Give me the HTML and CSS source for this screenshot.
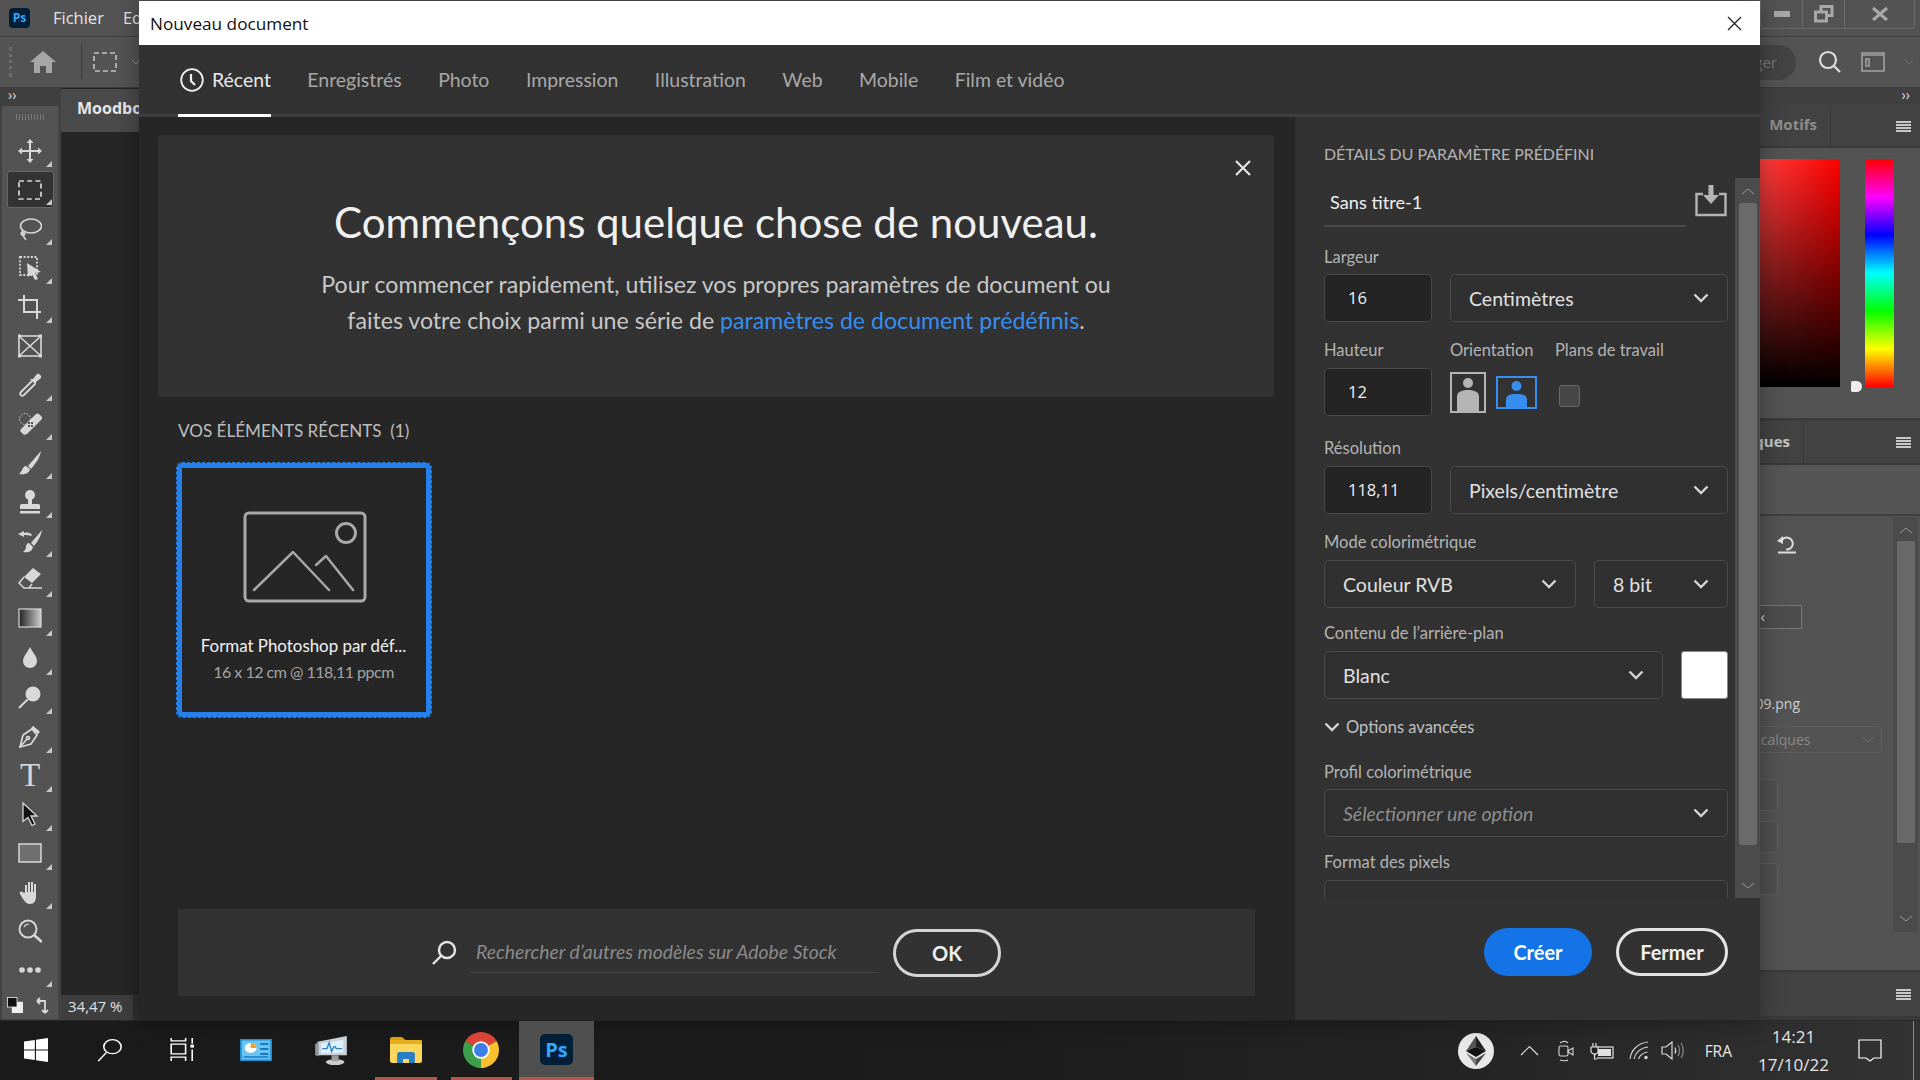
FILE: index.html
```html
<!DOCTYPE html>
<html lang="fr">
<head>
<meta charset="utf-8">
<title>Nouveau document</title>
<link rel="stylesheet" href="styles.css">
</head>
<body>
<div class="app">
  <header class="menubar">
    <div class="ps-logo small">Ps</div>
    <nav class="menu"><span>Fichier</span><span class="clipped">Edition</span></nav>
    <div class="winbtns">
      <div class="winbtn"><svg width="16" height="6"><rect width="16" height="6" fill="#a8a8a8"/></svg></div>
      <div class="winbtn"><svg width="20" height="18" fill="none" stroke="#a8a8a8" stroke-width="3"><rect x="7" y="1.5" width="11" height="9"/><rect x="1.5" y="7" width="11" height="9" fill="#535353"/></svg></div>
      <div class="winbtn wide"><svg width="16" height="14" stroke="#a8a8a8" stroke-width="3.2"><path d="M1 1l14 12M15 1L1 13"/></svg></div>
    </div>
  </header>
  <div class="optionbar">
    <div class="grip"></div>
    <svg class="home" width="26" height="22" viewBox="0 0 26 22" fill="#a6a6a6"><path d="M13 0L0 11h4v11h6v-7h6v7h6V11h4z"/></svg>
    <div class="optsep"></div>
    <svg width="24" height="20" viewBox="0 0 24 20" fill="none" stroke="#c4c4c4" stroke-width="1.6" stroke-dasharray="5 3"><rect x="1" y="1" width="22" height="18"/></svg>
    <svg class="optchev" width="10" height="6" fill="none" stroke="#8a8a8a"><path d="M1 1l4 4 4-4"/></svg>
    <div class="optright">
      <div class="sharepill">Partager</div>
      <svg width="24" height="24" viewBox="0 0 24 24" fill="none" stroke="#dedede" stroke-width="2.2"><circle cx="10" cy="10" r="8"/><path d="M16 16l6 6"/></svg>
      <svg width="24" height="20" viewBox="0 0 24 20" fill="none" stroke="#a0a0a0" stroke-width="1.6"><rect x="1" y="1" width="22" height="18"/><path d="M1 3h22M5 7h3v7H5z"/></svg>
      <svg width="10" height="6" fill="none" stroke="#6e6e6e"><path d="M1 1l4 4 4-4"/></svg>
    </div>
  </div>
  <div class="workspace">
    <aside class="leftcol">
      <div class="collapse">&#8250;&#8250;</div>
      <div class="toolbar">
        <div class="toolgrip"></div>
        <div class="tool more"><svg viewBox="0 0 24 24" fill="#d8d8d8"><path d="M12 0l3.5 4H13v7h7V8.500l4 3.500-4 3.500V13h-7v7h2.500L12 24l-3.500-4H11v-7H4v2.500L0 12l4-3.500V11h7V4H8.500z"/></svg></div>
        <div class="tool more on"><svg viewBox="0 0 24 24" fill="none" stroke="#d8d8d8" stroke-width="1.7" stroke-dasharray="5 3.200"><rect x="1" y="3" width="22" height="18"/></svg></div>
        <div class="tool more"><svg viewBox="0 0 24 24" fill="none" stroke="#d8d8d8" stroke-width="1.6"><ellipse cx="13" cy="9" rx="10.500" ry="7"/><path d="M5 14c-3 2-2 5 1 4 2-1 0-3-1-2-1 2 1 4 3 7"/></svg></div>
        <div class="tool more"><svg viewBox="0 0 24 24" fill="none" stroke="#d8d8d8" stroke-width="1.800"><rect x="2" y="1" width="17" height="18" stroke-dasharray="2 1.600"/><path fill="#d8d8d8" stroke="none" d="M9 7l14 9-6 1 3 6-3 1-3-6-4 3z"/></svg></div>
        <div class="tool more"><svg viewBox="0 0 24 24" fill="none" stroke="#d8d8d8" stroke-width="2"><path d="M0 5h5M6 0v17h17M6 5h13v19"/></svg></div>
        <div class="tool"><svg viewBox="0 0 24 24" fill="none" stroke="#d8d8d8" stroke-width="1.600"><rect x="1" y="2" width="22" height="20"/><path d="M1 2l22 20M23 2L1 22"/><path stroke-width="3" d="M0 2h3M21 2h3M0 22h3M21 22h3"/></svg></div>
        <div class="tool more"><svg viewBox="0 0 24 24" fill="none" stroke="#d8d8d8" stroke-width="1.800"><path d="M14 8L3 19c-2 2 0 5 3 3L17 11"/><path fill="#d8d8d8" stroke="none" d="M12 6l3 0 4-5c2-1 5 2 4 4l-5 4 0 3z"/></svg></div>
        <div class="tool more"><svg viewBox="0 0 24 24" fill="#d8d8d8"><circle cx="7" cy="7" r="5.500" fill="none" stroke="#d8d8d8" stroke-dasharray="1.500 1.500"/><path d="M3 17L17 3c2-2 3-2 5 0l1 1c2 2 1 3 0 4L9 22c-2 1-3 1-4 0l-2-2c-1-1-1-2 0-3z"/><path fill="#555" d="M10 10h2v2h-2zM13 10h2v2h-2zM10 13h2v2h-2zM13 13h2v2h-2z"/></svg></div>
        <div class="tool more"><svg viewBox="0 0 24 24" fill="#d8d8d8"><path d="M23 0L10 15l3 3C19 11 22 6 23 0zM8 15c-2 0-3 2-4 4s-2 3-3 4c4 1 10 0 11-5z"/></svg></div>
        <div class="tool more"><svg viewBox="0 0 24 24" fill="#d8d8d8"><circle cx="12" cy="5" r="5"/><path d="M10 8h4v6h6c2 0 2 1 2 2v3H2v-3c0-1 0-2 2-2h6z"/><rect x="2" y="21" width="20" height="2.500"/></svg></div>
        <div class="tool more"><svg viewBox="0 0 24 24" fill="#d8d8d8"><path d="M24 1L13 14l3 3C21 11 23 6 24 1zM11 14c-2 0-3 2-3 4s-1 3-3 5c4 1 9 0 10-5zM0 5l6-3v2c4-1 7 0 8 2l-1 1c-2-1-4-1-7-1v2z"/></svg></div>
        <div class="tool more"><svg viewBox="0 0 24 24" fill="none" stroke="#d8d8d8" stroke-width="1.500"><path fill="#d8d8d8" stroke="none" d="M15 0l8 6-9 9-8-6z"/><path d="M6 9l-5 6 5 5h5l3-4M6 20h18"/></svg></div>
        <div class="tool more"><svg viewBox="0 0 24 24"><defs><linearGradient id="g1"><stop offset="0" stop-color="#222"/><stop offset="1" stop-color="#ccc"/></linearGradient></defs><rect x="1" y="2" width="22" height="18" fill="url(#g1)" stroke="#d8d8d8" stroke-width="1.200"/></svg></div>
        <div class="tool more"><svg viewBox="0 0 24 24" fill="#d8d8d8"><path d="M12 1c2 5 7 9 7 14a7 7 0 0 1-14 0c0-5 5-9 7-14z"/></svg></div>
        <div class="tool more"><svg viewBox="0 0 24 24" fill="#d8d8d8"><circle cx="15" cy="9" r="7.500"/><path d="M1 23L9.500 14.500" stroke="#d8d8d8" stroke-width="2"/></svg></div>
        <div class="tool more"><svg viewBox="0 0 24 24" fill="none" stroke="#d8d8d8" stroke-width="1.700"><path d="M2 23l3-12 9-6 5 6-6 9z"/><path stroke-width="3" d="M14 3l7 6"/><path d="M2 23l7-8"/><circle cx="10" cy="14" r="1.500"/></svg></div>
        <div class="tool more"><span class="ttool">T</span></div>
        <div class="tool more"><svg viewBox="0 0 24 24"><path fill="#111" stroke="#d8d8d8" stroke-width="1.300" d="M5 1l14 13h-6l4 8-3 1.500-4-8-5 4z"/></svg></div>
        <div class="tool more"><svg viewBox="0 0 24 24"><rect x="1" y="3" width="22" height="18" fill="#6f6f6f" stroke="#d8d8d8" stroke-width="1.500"/></svg></div>
        <div class="tool more"><svg viewBox="0 0 24 24" fill="#d8d8d8"><path d="M7 13V5h2v7h1V2h2v10h1V2h2v10h1V4h2v12c0 5-2 8-6 8-3 0-5-2-7-5l-3-5c-1-2 1-3 2-2z"/></svg></div>
        <div class="tool"><svg viewBox="0 0 24 24" fill="none" stroke="#d8d8d8" stroke-width="1.900"><circle cx="10" cy="10" r="8.500"/><path stroke-width="1.200" d="M6 8c1-2 3-3 5-3"/><path stroke-width="2.600" d="M16 16l8 7"/></svg></div>
        <div class="tool more"><svg viewBox="0 0 24 24" fill="#d8d8d8"><circle cx="4" cy="12" r="2.800"/><circle cx="12" cy="12" r="2.800"/><circle cx="20" cy="12" r="2.800"/></svg></div>
        <div class="colorswap">
          <svg width="16" height="16" viewBox="0 0 20 20"><rect x="6" y="6" width="14" height="14" fill="#eee"/><rect x="0.500" y="0.500" width="12" height="12" fill="#111" stroke="#eee"/></svg>
          <svg width="16" height="18" fill="none" stroke="#d8d8d8" stroke-width="1.800"><path d="M1 4h8v11M1 4l3-3M1 4l3 3M9 16l-3-3M9 16l3-3"/></svg>
        </div>
      </div>
    </aside>
    <main class="canvas">
      <div class="doctab">Moodboard</div>
      <div class="artboard"></div>
      <div class="statusbar"><span class="zoomval">34,47 %</span></div>
    </main>
    <aside class="rightcol">
      <div class="collapse right">&#8250;&#8250;</div>
      <div class="paneltabs h40"><span class="ptab">Motifs</span><span class="burger"></span></div>
      <div class="colorpanel">
        <div class="field-sat"></div>
        <div class="hue"><span class="huemark"></span></div>
      </div>
      <div class="paneltabs h41"><span class="ptab calques">Calques</span><span class="burger"></span></div>
      <div class="band"></div>
      <div class="propspanel">
        <div class="propsbody">
          <svg class="undo" width="20" height="20" viewBox="0 0 20 20" fill="none" stroke="#dedede" stroke-width="2"><path d="M1 18.500h18M4 8a6 6 0 1 1 5 7.500"/><path fill="#dedede" stroke="none" d="M0 7l6-5v8z"/></svg>
          <div class="pinput">‹</div>
          <div class="pname">IMG_2009.png</div>
          <div class="pselect"><span>Tous les calques</span><svg width="14" height="8" fill="none" stroke="#6e6e6e"><path d="M1 1l6 5 6-5"/></svg></div>
          <div class="pbtn first"></div>
          <div class="pbtn"></div>
          <div class="pbtn"></div>
        </div>
        <div class="pscroll"><svg width="14" height="8" fill="none" stroke="#999"><path d="M1 7l6-5 6 5"/></svg><div class="pthumb"></div><svg class="pdown" width="14" height="8" fill="none" stroke="#999"><path d="M1 1l6 5 6-5"/></svg></div>
      </div>
      <div class="paneltabs h45"><span class="burger"></span></div>
    </aside>
  </div>
</div>

<section class="dialog">
  <div class="titlebar"><span>Nouveau document</span>
    <svg width="15" height="15" stroke="#222" stroke-width="1.300"><path d="M1 1l13 13M14 1L1 14"/></svg>
  </div>
  <nav class="tabs">
    <div class="tab active"><svg width="24" height="24" viewBox="0 0 24 24" fill="none" stroke="#f0f0f0" stroke-width="1.800"><circle cx="12" cy="12" r="10.800"/><path stroke-width="2.200" d="M11 6v7l4 4"/></svg><span>Récent</span></div>
    <div class="tab">Enregistrés</div>
    <div class="tab">Photo</div>
    <div class="tab">Impression</div>
    <div class="tab">Illustration</div>
    <div class="tab">Web</div>
    <div class="tab">Mobile</div>
    <div class="tab">Film et vidéo</div>
  </nav>
  <div class="dbody">
    <div class="dmain">
      <div class="hero">
        <svg class="heroclose" width="18" height="18" stroke="#e4e4e4" stroke-width="2.200"><path d="M2 2l14 14M16 2L2 16"/></svg>
        <h1>Commençons quelque chose de nouveau.</h1>
        <p>Pour commencer rapidement, utilisez vos propres paramètres de document ou<br>faites votre choix parmi une série de <a>paramètres de document prédéfinis</a>.</p>
      </div>
      <h2 class="recent-h">VOS ÉLÉMENTS RÉCENTS&nbsp; (1)</h2>
      <div class="card">
        <svg width="124" height="92" viewBox="0 0 124 92" fill="none" stroke="#a8a8a8" stroke-width="3" stroke-linejoin="round" stroke-linecap="round"><rect x="2" y="2" width="120" height="88" rx="4"/><circle cx="103" cy="22" r="9.500"/><path stroke-width="2.500" d="M11 79l39-38 36 38M73 54l10-9 27 34"/></svg>
        <div class="cardtitle">Format Photoshop par déf...</div>
        <div class="cardsub">16 x 12 cm @ 118,11 ppcm</div>
      </div>
      <div class="stock">
        <svg width="26" height="26" viewBox="0 0 26 26" fill="none" stroke="#e4e4e4" stroke-width="2.400"><circle cx="16" cy="10" r="8"/><path d="M10 16l-8 8"/></svg>
        <div class="stockinput">Rechercher d’autres modèles sur Adobe Stock</div>
        <div class="btn ghost ok">OK</div>
      </div>
    </div>
    <aside class="details">
      <h2>DÉTAILS DU PARAMÈTRE PRÉDÉFINI</h2>
      <div class="scrollwrap">
        <div class="form">
          <div class="namerow">
            <div class="nameinput">Sans titre-1</div>
            <svg width="32" height="32" viewBox="0 0 32 32" fill="none" stroke="#b4b4b4" stroke-width="2.400"><path d="M8 9H1.500v21h29V9H24"/><path fill="#b4b4b4" stroke="none" d="M13.500 0h5v10H24l-8 9-8-9h5.500z"/></svg>
          </div>
          <label class="lab l1">Largeur</label>
          <div class="row"><div class="num">16</div><div class="sel grow"><span>Centimètres</span><svg class="chev" viewBox="0 0 16 10"><path d="M1.500 1.500L8 8l6.500-6.500"/></svg></div></div>
          <div class="tri l2"><label class="lab">Hauteur</label><label class="lab">Orientation</label><label class="lab">Plans de travail</label></div>
          <div class="row"><div class="num">12</div>
            <div class="orient">
              <svg width="36" height="41" viewBox="0 0 36 41"><rect x="1" y="1" width="34" height="39" fill="none" stroke="#b4b4b4" stroke-width="2"/><circle cx="18" cy="11" r="5" fill="#b4b4b4"/><path fill="#b4b4b4" d="M7 39V25c0-5 4-7 11-7s11 2 11 7v14z"/></svg>
              <svg width="41" height="33" viewBox="0 0 41 33"><rect x="1" y="1" width="39" height="31" fill="none" stroke="#378ef0" stroke-width="2"/><circle cx="20.500" cy="10" r="5" fill="#378ef0"/><path fill="#378ef0" d="M10 31v-7c0-5 4-6 10.500-6S31 19 31 24v7z"/></svg>
            </div>
            <div class="check"></div>
          </div>
          <label class="lab l3">Résolution</label>
          <div class="row"><div class="num">118,11</div><div class="sel grow"><span>Pixels/centimètre</span><svg class="chev" viewBox="0 0 16 10"><path d="M1.500 1.500L8 8l6.500-6.500"/></svg></div></div>
          <label class="lab l4">Mode colorimétrique</label>
          <div class="row"><div class="sel grow"><span>Couleur RVB</span><svg class="chev" viewBox="0 0 16 10"><path d="M1.500 1.500L8 8l6.500-6.500"/></svg></div><div class="sel w134"><span>8 bit</span><svg class="chev" viewBox="0 0 16 10"><path d="M1.500 1.500L8 8l6.500-6.500"/></svg></div></div>
          <label class="lab l5">Contenu de l’arrière-plan</label>
          <div class="row"><div class="sel grow"><span>Blanc</span><svg class="chev" viewBox="0 0 16 10"><path d="M1.500 1.500L8 8l6.500-6.500"/></svg></div><div class="swatch"></div></div>
          <div class="advanced"><svg class="chev" viewBox="0 0 16 10"><path d="M1.500 1.500L8 8l6.500-6.500"/></svg><span>Options avancées</span></div>
          <label class="lab l6">Profil colorimétrique</label>
          <div class="row"><div class="sel grow"><em>Sélectionner une option</em><svg class="chev" viewBox="0 0 16 10"><path d="M1.500 1.500L8 8l6.500-6.500"/></svg></div></div>
          <label class="lab l7">Format des pixels</label>
          <div class="row"><div class="sel grow low"><span>Pixels carrés</span><svg class="chev" viewBox="0 0 16 10"><path d="M1.500 1.500L8 8l6.500-6.500"/></svg></div></div>
        </div>
        <div class="dscroll">
          <svg width="14" height="8" fill="none" stroke="#999"><path d="M1 7l6-5 6 5"/></svg>
          <div class="dthumb"></div>
          <svg width="14" height="8" fill="none" stroke="#999"><path d="M1 1l6 5 6-5"/></svg>
        </div>
      </div>
      <div class="actions"><div class="btn primary">Créer</div><div class="btn ghost">Fermer</div></div>
    </aside>
  </div>
</section>

<footer class="taskbar">
  <div class="tasks">
    <div class="task narrow"><svg width="24" height="24" viewBox="0 0 21 24" preserveAspectRatio="none" fill="#fff"><path d="M0 3.500L9.500 2v9.500H0zM10.500 1.800L21 0v11.500H10.500zM0 12.500h9.500V22L0 20.500zM10.500 12.500H21V24l-10.500-1.800z"/></svg></div>
    <div class="task narrow"><svg width="25" height="24" viewBox="0 0 21 25" preserveAspectRatio="none" fill="none" stroke="#fff" stroke-width="1.300"><circle cx="13" cy="9" r="7.300"/><path d="M8 15L1 24"/></svg></div>
    <div class="task narrow"><svg width="24" height="23" viewBox="0 0 20 24" preserveAspectRatio="none" fill="none" stroke="#fff" stroke-width="1.300"><path d="M1 0v3h12V0M1 6.500h12v10H1zM1 24v-4h12v4M18.500 0v6M18.500 12v12"/><rect x="17" y="7" width="3" height="3" fill="#fff" stroke="none"/></svg></div>
    <div class="task"><svg width="32" height="22" viewBox="0 0 27 22" preserveAspectRatio="none"><rect width="27" height="22" fill="#1d8fd8"/><rect x="1.500" y="1.500" width="24" height="19" fill="#6cc4f0"/><circle cx="9" cy="9" r="5" fill="#fff"/><path d="M9 9V4a5 5 0 0 1 5 5z" fill="#f0a030"/><path d="M17 4h7v2h-7zM17 9h7v2h-7zM17 14h7v2h-7z" fill="#1a78c0"/><path d="M3 17h21v2H3z" fill="#2a8fd0"/></svg></div>
    <div class="task"><svg width="34" height="30" viewBox="0 0 29 31" preserveAspectRatio="none"><path d="M3 7l25-6v20L3 21z" fill="#c9d2d8"/><path d="M6 9l19-4v13L6 19z" fill="#dff1fa"/><path d="M7 14h4l2-6 2 9 2-5h1l1 2h5" fill="none" stroke="#2a86c4" stroke-width="1.200"/><path d="M1 9l3-1v14l-3-1z" fill="#8f9a9f"/><ellipse cx="18" cy="28" rx="8" ry="3" fill="#ccc"/><rect x="15" y="21" width="6" height="6" fill="#9a9a9a"/></svg></div>
    <div class="task open"><svg width="32" height="26" viewBox="0 0 27 26" preserveAspectRatio="none"><path d="M0 2a2 2 0 0 1 2-2h8l3 3h-13z" fill="#d8a008"/><path d="M0 3h26a1 1 0 0 1 1 1v4H0z" fill="#e8b020"/><path d="M0 7h27v17a2 2 0 0 1-2 2H2a2 2 0 0 1-2-2z" fill="#fbd75b"/><path d="M6 26V17a2 2 0 0 1 2-2h11a2 2 0 0 1 2 2v9h-5v-4h-5v4z" fill="#2a7fc4"/></svg></div>
    <div class="task open"><svg width="36" height="36" viewBox="0 0 28 28"><path d="M14 14L26.100 7A14 14 0 0 0 1.900 7z" fill="#db4437"/><path d="M14 14L26.100 7A14 14 0 0 1 14 28z" fill="#fbc02d"/><path d="M14 14L14 28A14 14 0 0 1 1.900 7z" fill="#3a9e4b"/><circle cx="14" cy="14" r="6.800" fill="#fff"/><circle cx="14" cy="14" r="5.400" fill="#3b7ee8"/></svg></div>
    <div class="task current"><div class="ps-logo">Ps</div></div>
  </div>
  <div class="tray">
    <div class="eth"><svg width="20" height="30" viewBox="0 0 20 30"><path d="M10 0L0 15l10-4z" fill="#555"/><path d="M10 0l10 15-10-4z" fill="#222"/><path d="M0 15l10-4 10 4-10 6z" fill="#111"/><path d="M0 17l10 13v-7z" fill="#777"/><path d="M20 17L10 30v-7z" fill="#444"/></svg></div>
    <svg class="t1" width="19" height="11" fill="none" stroke="#d8d8d8" stroke-width="1.200"><path d="M1 10l8.500-8.500L18 10"/></svg>
    <svg class="t2" width="16" height="24" viewBox="0 0 16 24" fill="none" stroke="#d8d8d8" stroke-width="1.100"><rect x="1" y="7" width="9" height="10" rx="1.500"/><path d="M10 12l5-3v7l-5-3zM2 4c3-2 6-2 8 0M2 21c3 1 6 1 8 0"/></svg>
    <svg class="t3" width="24" height="20" viewBox="0 0 24 20" fill="none" stroke="#e0e0e0" stroke-width="1.200"><rect x="5" y="6" width="18" height="11"/><rect x="8" y="8" width="13" height="7" fill="#e0e0e0" stroke="none"/><path fill="#1f1f1f" d="M1 6h7v4c0 2-2 3-3.500 3S1 12 1 10zM3 2v4M6 2v4M4.500 13v5h3"/></svg>
    <svg class="t4" width="20" height="19" viewBox="0 0 20 19" fill="none" stroke="#d0d0d0" stroke-width="1.200"><path d="M1 18C2 9 9 2 19 1M5 18c1-6 6-11 14-12M9.500 18c1-3 3-6 9-7"/><circle cx="17" cy="16.500" r="1.700" fill="#e0e0e0" stroke="none"/></svg>
    <svg class="t5" width="23" height="19" viewBox="0 0 23 19" fill="none" stroke="#d8d8d8" stroke-width="1.200"><path d="M1 6h4l6-5v17l-6-5H1z"/><path d="M14 6.500c1 2 1 4 0 6"/><path stroke="#888" d="M17 4c2 3 2 8 0 11M20 2c3 4 3 11 0 15"/></svg>
    <span class="lang">FRA</span>
    <div class="clock"><span>14:21</span><span>17/10/22</span></div>
    <svg class="t6" width="24" height="24" viewBox="0 0 24 24" fill="none" stroke="#fff" stroke-width="1.200"><path d="M1 1h22v18h-7l-4 3-4-3H1z"/></svg>
    <div class="peek"></div>
  </div>
</footer>
</body>
</html>
```
FILE: styles.css
```css
* { box-sizing: border-box; }
html, body { margin: 0; height: 100%; }
body {
  width: 1920px; height: 1080px; overflow: hidden; position: relative;
  display: flex; flex-direction: column;
  background: #2b2b2b; color: #ddd;
  font-family: "Open Sans", "Noto Sans", sans-serif;
}
svg { display: block; flex: none; }
h1, h2, p { margin: 0; font-weight: 400; }

/* Photoshop app behind the dialog */
.app { height: 1020px; display: flex; flex-direction: column; background: #3a3a3a; }
.menubar { height: 37px; background: #535353; display: flex; align-items: center; padding-left: 9px; border-bottom: 1px solid #3c3c3c; }
.ps-logo {
  width: 33px; height: 31px; border-radius: 5px; background: #001e36; color: #31a8ff;
  font: 700 20px/31px "Open Sans", sans-serif; text-align: center;
}
.ps-logo.small { width: 21px; height: 20px; border-radius: 4px; font-size: 12px; line-height: 20px; }
.menu { display: flex; gap: 19px; margin: -2px 0 0 23px; font-size: 16.500px; color: #e4e4e4; }
.menu .clipped { width: 17px; overflow: hidden; white-space: nowrap; }
.winbtns { margin-left: auto; margin-right: 5px; margin-top: -8px; height: 29px; width: 155px; display: flex; border: 1px solid #6a6a6a; border-top: 0; border-radius: 0 0 4px 4px; }
.winbtn { width: 42px; display: flex; align-items: center; justify-content: center; border-right: 1px solid #6a6a6a; }
.winbtn.wide { flex: 1; border-right: 0; }

.optionbar { height: 51px; background: #535353; display: flex; align-items: center; padding-left: 9px; border-bottom: 1px solid #3c3c3c; }
.grip { width: 3px; height: 30px; border-left: 3px dotted #6c6c6c; }
.home { margin-left: 18px; }
.optsep { width: 1px; height: 34px; background: #3c3c3c; margin: 0 11px 0 25px; }
.optchev { margin-left: 14px; }
.optright { margin-left: auto; display: flex; align-items: center; gap: 19px; padding-right: 6px; }
.sharepill { width: 120px; height: 35px; margin-right: 3px; border-radius: 18px; background: #434343; color: #777; font-size: 15px; line-height: 35px; text-align: right; padding-right: 19px; }

.workspace { flex: 1; min-height: 0; display: flex; }
.leftcol { width: 61px; display: flex; flex-direction: column; flex: none; background: #424242; }
.collapse { height: 18px; flex: none; font-size: 14px; line-height: 14px; color: #ddd; padding-left: 8px; background: #404040; }
.collapse.right { text-align: right; padding: 0 10px 0 0; }
.toolbar { flex: 1; margin: 0 2px 1px 2px; background: #535353; display: flex; flex-direction: column; align-items: center; border-right: 1px solid #484848; }
.toolgrip { width: 28px; height: 6px; flex: none; margin: 8px 0 11px; background: repeating-linear-gradient(90deg, #7a7a7a 0 1px, transparent 1px 3px); }
.tool { width: 47px; height: 39.050px; flex: none; display: flex; align-items: center; justify-content: center; position: relative; border: 1px solid transparent; border-radius: 3px; }
.tool svg { width: 24px; height: 24px; }
.tool.on { background: #333; border-color: #666; height: 37px; margin: 1px 0; }
.tool.more::after { content: ""; position: absolute; right: 1px; bottom: 2px; border: 3px solid transparent; border-right-color: #c8c8c8; border-bottom-color: #c8c8c8; }
.ttool { font: 400 33px/32px "Liberation Serif", serif; color: #d8d8d8; }
.colorswap { margin-top: auto; width: 50px; height: 22px; display: flex; justify-content: space-between; padding: 2px 3px 0 2px; margin-bottom: 2px; }

.canvas { flex: 1; min-width: 0; display: flex; flex-direction: column; background: #262626; }
.doctab { height: 43px; width: 200px; background: #4a4a4a; padding: 3px 0 0 16px; font: 700 16px/32px "Open Sans", sans-serif; color: #e8e8e8; margin-top: 1px; }
.artboard { flex: 1; }
.statusbar { height: 25px; background: #2f2f2f; }
.zoomval { display: block; width: 72px; height: 25px; background: #3e3e3e; padding-left: 7px; font-size: 15px; line-height: 23px; color: #e0e0e0; }

.rightcol { width: 260px; flex: none; display: flex; flex-direction: column; background: #3a3a3a; }
.paneltabs { display: flex; align-items: center; justify-content: flex-end; background: #424242; padding-right: 9px; border-bottom: 2px solid #393939; position: relative; }
.h40 { height: 42px; }
.h41 { height: 44px; margin-top: 1px; }
.h45 { height: 46px; margin-top: 2px; margin-bottom: 2px; }
.ptab { font: 700 15px/37px "Open Sans", sans-serif; color: #8e8e8e; margin-right: 65px; height: 100%; padding: 0 13px 0 0; border-right: 1px solid #393939; }
.ptab.calques { color: #c4c4c4; margin-right: 92px; line-height: 40px; }
.burger { width: 15px; height: 11px; background: repeating-linear-gradient(180deg, #c8c8c8 0 2px, transparent 2px 3px); }
.colorpanel { height: 272px; background: #535353; display: flex; padding: 11px 0 0 100px; border-bottom: 2px solid #3a3a3a; }
.field-sat { width: 80px; height: 228px; background: linear-gradient(180deg, transparent, #000), linear-gradient(90deg, #ff4040, #ff0000); }
.hue { width: 29px; height: 228px; margin-left: 25px; position: relative; background: linear-gradient(180deg, #f00, #f0f 16.670%, #00f 33.330%, #0ff 50%, #0f0 66.670%, #ff0 83.330%, #f00); }
.huemark { position: absolute; left: -14px; bottom: -5px; width: 11px; height: 11px; background: #eee; border-radius: 2px 6px 6px 2px; }
.band { height: 51px; background: #555; border-bottom: 2px solid #3f3f3f; }
.propspanel { flex: 1; display: flex; background: #535353; padding-top: 1px; position: relative; }
.propsbody { flex: 1; display: flex; flex-direction: column; align-items: flex-end; min-width: 0; }
.undo { margin: 17px 96px 0 0; flex: none; }
.pinput { width: 150px; height: 24px; flex: none; margin: 51px 91px 0 0; border: 1px solid #777; background: #4c4c4c; font-size: 15px; line-height: 21px; text-align: right; padding-right: 36px; color: #ddd; }
.pname { margin: 65px 93px 0 0; font-size: 14px; line-height: 20px; color: #d0d0d0; flex: none; }
.pselect { width: 220px; height: 27px; flex: none; margin: 12px 11px 0 0; display: flex; align-items: center; justify-content: space-between; padding: 0 6px 0 41px; border: 1px solid #5e5e5e; border-radius: 4px; font-size: 14px; color: #8a8a8a; white-space: nowrap; }
.pbtn { width: 120px; height: 32px; flex: none; margin: 10px 115px 0 0; border: 1px solid #5e5e5e; border-radius: 4px; background: #4f4f4f; }
.pbtn.first { margin-top: 26px; }
.pscroll { width: 25px; height: 415px; margin-right: 2px; background: #4b4b4b; display: flex; flex-direction: column; align-items: center; padding-top: 9px; }
.pthumb { width: 18px; height: 302px; margin-top: 7px; background: #696969; border-radius: 2px; }
.pdown { margin-top: auto; margin-bottom: 9px; }

/* Modal dialog window */
.dialog { position: absolute; left: 139px; top: 1px; width: 1621px; height: 1019px; display: flex; flex-direction: column; background: #323232; box-shadow: 0 0 22px rgba(0,0,0,.35); }
.titlebar { height: 44px; flex: none; background: #fff; color: #101010; display: flex; align-items: center; justify-content: space-between; padding: 0 18px 0 11px; font-size: 17.200px; }
.tabs { height: 72px; flex: none; display: flex; gap: 36.500px; padding-left: 39px; background: #323232; border-bottom: 3px solid #3e3e3e; font: 400 19.450px/70px Lato, sans-serif; color: #a8a8a8; }
.tab { height: 72px; }
.tab.active { display: flex; align-items: center; gap: 8px; color: #eaeaea; border-bottom: 3px solid #fff; padding: 0 0 0 2px; line-height: 1; }
.dbody { flex: 1; min-height: 0; display: flex; }
.dmain { width: 1156px; flex: none; background: #262626; padding: 18px 21px 24px 19px; display: flex; flex-direction: column; }
.hero { height: 262px; flex: none; background: #323232; border-radius: 3px; text-align: center; position: relative; padding-top: 60px; }
.hero h1 { font: 400 42px/54px Lato, sans-serif; color: #f0f0f0; }
.hero p { margin-top: 17px; font: 400 23.150px/36px Lato, sans-serif; color: #c8c8c8; }
.hero a { color: #378ef0; }
.heroclose { position: absolute; right: 22px; top: 24px; }
.recent-h { margin: 23px 0 0 20px; font: 400 17.100px/22px Lato, sans-serif; color: #bdbdbd; }
.card { margin: 21px 0 0 18.500px; width: 254px; height: 254px; flex: none; background: #262626; border: 5px solid #2680eb; border-radius: 5px; outline: 1px dashed #2680eb; display: flex; flex-direction: column; align-items: center; padding-top: 43px; }
.card svg { margin-left: 2px; }
.cardtitle { margin-top: 31px; font: 400 16.900px/24px Lato, sans-serif; color: #f2f2f2; white-space: nowrap; }
.cardsub { margin-top: 2px; font: 400 16px/24px Lato, sans-serif; letter-spacing: -.5px; color: #a4a4a4; white-space: nowrap; }
.stock { margin: auto 0 0 20px; width: 1077px; height: 87px; flex: none; background: #323232; display: flex; align-items: center; padding: 0 0 0 253px; }
.stockinput { width: 409px; height: 41px; margin-left: 13px; border-bottom: 1px solid #444; font: italic 400 19.350px/40px Lato, sans-serif; color: #8a8a8a; padding-left: 6px; white-space: nowrap; }
.btn { height: 48px; border-radius: 24px; display: flex; align-items: center; justify-content: center; font: 700 20px/1 Lato, sans-serif; color: #f0f0f0; }
.btn.ghost { border: 3px solid #e4e4e4; background: transparent; }
.btn.ok { width: 108px; margin-left: 14px; border-color: #d4d4d4; }
.btn.primary { width: 108px; background: #1473e6; color: #fff; }
.actions .ghost { width: 112px; }

.details { flex: 1; display: flex; flex-direction: column; background: #323232; min-width: 0; }
.details h2 { height: 61px; padding: 26px 0 0 29px; font: 400 15.900px/22px Lato, sans-serif; color: #b4b4b4; white-space: nowrap; }
.scrollwrap { height: 720px; flex: none; display: flex; overflow: hidden; }
.form { width: 440px; flex: none; padding: 7px 7px 0 29px; display: flex; flex-direction: column; }
.namerow { height: 42px; flex: none; display: flex; justify-content: space-between; }
.nameinput { width: 362px; height: 42px; border-bottom: 2px solid #4a4a4a; padding-left: 6px; font: 400 18.200px/35px Lato, sans-serif; color: #f0f0f0; }
.namerow svg { margin-right: 1px; }
.lab { display: block; height: 22px; flex: none; font: 400 16.500px/22px Lato, sans-serif; color: #b4b4b4; white-space: nowrap; }
.l1 { margin: 19px 0 6px; }
.l2 { margin: 17px 0 7px; }
.l3 { margin: 21px 0 7px; }
.l4 { margin: 17px 0 7px; }
.l5 { margin: 14px 0 7px; }
.l6 { margin: 25px 0 6px; }
.l7 { margin: 14px 0 7px; }
.tri { display: flex; flex: none; }
.tri .lab:nth-child(1) { width: 126px; }
.tri .lab:nth-child(2) { width: 105px; }
.row { display: flex; gap: 18px; height: 48px; flex: none; }
.num { width: 108px; height: 48px; flex: none; background: #242424; border: 1.500px solid #484848; border-radius: 5px; padding-left: 23px; font: 400 16.500px/46px "Open Sans", sans-serif; color: #f0f0f0; }
.sel { height: 48px; background: #303030; border: 1.500px solid #4a4a4a; border-radius: 5px; display: flex; align-items: center; justify-content: space-between; padding: 2px 18px 0; font: 400 19.500px/1 Lato, sans-serif; color: #e0e0e0; white-space: nowrap; }
.sel .chev { margin-top: -2px; }
.sel.grow { flex: 1; min-width: 0; }
.sel.w134 { width: 134px; flex: none; }
.sel.low { padding-top: 6px; }
.sel em { font-style: italic; color: #8e8e8e; }
.chev { width: 16px; height: 10px; fill: none; stroke: #d4d4d4; stroke-width: 2.400; }
.orient { width: 105px; display: flex; gap: 10px; align-items: flex-start; padding-top: 4px; margin-right: -18px; }
.orient svg:last-child { margin-top: 4px; }
.check { width: 21px; height: 22px; margin: 17px 0 0 4px; background: #464646; border: 1.500px solid #6a6a6a; border-radius: 3px; }
.swatch { width: 47px; height: 48px; flex: none; background: #fff; border-radius: 3px; border: 1px solid #888; }
.advanced { height: 18px; margin-top: 19px; display: flex; align-items: center; gap: 6px; font: 400 16.500px/18px Lato, sans-serif; color: #c0c0c0; flex: none; }
.dscroll { width: 25px; flex: none; background: #4b4b4b; display: flex; flex-direction: column; align-items: center; padding-top: 9px; }
.dthumb { width: 18px; height: 642px; margin: 8px 0 37px 0; background: #6b6b6b; border-radius: 2px; }
.actions { display: flex; justify-content: flex-end; gap: 24px; padding: 30px 32px 0 0; }

/* Windows taskbar */
.taskbar { height: 60px; flex: none; display: flex; justify-content: space-between; background: linear-gradient(90deg, #1a1a1a, #1c1c1c 50%, #232323 75%, #333 100%); border-top: 1px solid #2a2a2a; }
.tasks { display: flex; }
.task { width: 75.200px; height: 59px; padding-bottom: 2px; display: flex; align-items: center; justify-content: center; position: relative; }
.task.narrow { width: 72.700px; }
.task.open::after, .task.current::after { content: ""; position: absolute; left: 7px; right: 7px; bottom: 0; height: 3px; background: #b2574e; }
.task.current { background: #4f4f4f; }
.task.current::after { left: 0; right: 0; }
.tray { display: flex; align-items: center; color: #e6e6e6; }
.eth { width: 36px; height: 36px; border-radius: 50%; background: #e8e8e8; display: flex; align-items: center; justify-content: center; }
.t1 { margin-left: 26.600px; }
.t2 { margin-left: 18.800px; }
.t3 { margin-left: 15.800px; }
.t4 { margin-left: 14.800px; }
.t5 { margin-left: 12.400px; }
.lang { margin-left: 20.600px; font-size: 15.500px; }
.clock { width: 100px; margin-left: 11.500px; display: flex; flex-direction: column; align-items: center; gap: 5px; font-size: 17px; line-height: 23px; }
.t6 { margin-left: 14.500px; }
.peek { width: 1px; height: 59px; margin-left: 31px; background: #8a8a8a; margin-right: 6px; }
```
